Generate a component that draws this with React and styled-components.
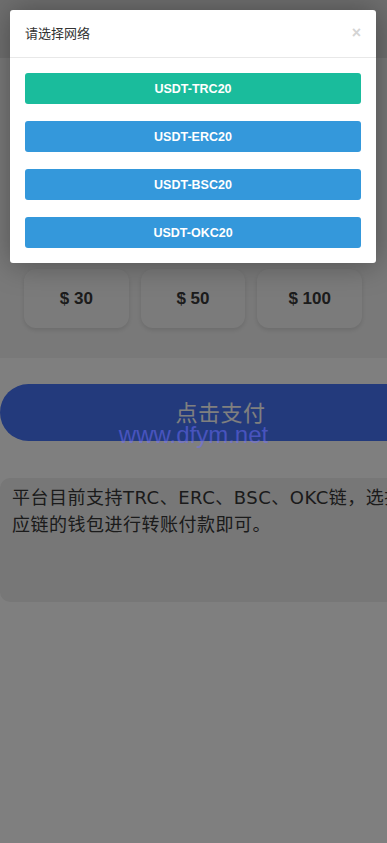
import React from 'react'
import styled, { createGlobalStyle } from 'styled-components'

const GlobalStyle = createGlobalStyle`
  html, body {
    margin: 0;
    padding: 0;
    height: 843px;
    overflow: hidden;
    background: #fff;
    font-family: "Noto Sans CJK SC", "Liberation Sans", sans-serif;
  }
`

export const Page = styled.div`
  position: relative;
  width: 387px;
  height: 843px;
  overflow: hidden;
  background: #fff;
`

export const TopBar = styled.div`
  height: 58px;
  background: #dedede;
`

export const AmountSection = styled.div`
  height: 300px;
  box-sizing: border-box;
  padding: 211px 25px 30px 24px;
  background: #f3f3f3;
`

export const AmountGrid = styled.div`
  display: grid;
  grid-template-columns: repeat(3, 1fr);
  gap: 12px;
`

export const AmountCard = styled.div`
  height: 59px;
  display: flex;
  align-items: center;
  justify-content: center;
  border-radius: 12px;
  background: #f7f7f7;
  box-shadow: 0 2px 5px rgba(0, 0, 0, 0.12);
  font-family: "Liberation Sans", Arial, sans-serif;
  font-weight: bold;
  font-size: 17px;
  color: #383838;
`

export const PayArea = styled.div`
  padding-top: 26px;
`

export const PayButton = styled.div`
  width: 441px;
  height: 57px;
  box-sizing: border-box;
  padding-bottom: 3px;
  border-radius: 29px;
  background: #4674f8;
  color: #fff;
  display: flex;
  align-items: center;
  justify-content: center;
  font-size: 22px;
  letter-spacing: 0.5px;
`

export const Notice = styled.div`
  margin-top: 37px;
  width: 460px;
  height: 124px;
  box-sizing: border-box;
  padding: 6px 30px 0 12px;
  border-radius: 10px;
  background: #eeeeee;
  font-size: 18px;
  line-height: 27px;
  letter-spacing: 0.5px;
  color: #363636;
  font-family: "DejaVu Sans", "Noto Sans CJK SC", sans-serif;
`

export const Shade = styled.div`
  position: absolute;
  inset: 0;
  background: rgba(0, 0, 0, 0.5);
`

export const Watermark = styled.div`
  position: absolute;
  top: 421px;
  left: 0;
  right: 0;
  text-align: center;
  font-family: "Liberation Sans", Arial, sans-serif;
  font-size: 24px;
  color: rgba(110, 110, 255, 0.5);
`

export const Dialog = styled.div`
  position: absolute;
  top: 10px;
  left: 10px;
  width: 366px;
  background: #fff;
  border-radius: 3px;
  box-shadow: 1px 1px 30px rgba(0, 0, 0, 0.35);
`

export const DialogHead = styled.div`
  height: 48px;
  box-sizing: border-box;
  padding: 0 15px 2px;
  display: flex;
  align-items: center;
  justify-content: space-between;
  border-bottom: 1px solid #e8e8e8;
  font-size: 13px;
  color: #333;
`

export const Close = styled.span`
  font-family: "Liberation Sans", Arial, sans-serif;
  font-size: 16px;
  font-weight: bold;
  color: #d4d4d4;
`

export const DialogBody = styled.div`
  display: flex;
  flex-direction: column;
  gap: 17px;
  padding: 15px;
`

export const NetButton = styled.div`
  height: 31px;
  border-radius: 3px;
  display: flex;
  align-items: center;
  justify-content: center;
  background: ${p => (p.$active ? '#1abc9c' : '#3498db')};
  color: #fff;
  font-family: "Liberation Sans", Arial, sans-serif;
  font-weight: bold;
  font-size: 12.5px;
`

const amounts = ['$ 30', '$ 50', '$ 100']
const networks = ['USDT-TRC20', 'USDT-ERC20', 'USDT-BSC20', 'USDT-OKC20']

export default function App() {
  return (
    <Page>
      <GlobalStyle />
      <TopBar />
      <AmountSection>
        <AmountGrid>
          {amounts.map(a => (
            <AmountCard key={a}>{a}</AmountCard>
          ))}
        </AmountGrid>
      </AmountSection>
      <PayArea>
        <PayButton>点击支付</PayButton>
      </PayArea>
      <Notice>平台目前支持TRC、ERC、BSC、OKC链，选择对应链的钱包进行转账付款即可。</Notice>
      <Shade />
      <Watermark>www.dfym.net</Watermark>
      <Dialog>
        <DialogHead>
          <span>请选择网络</span>
          <Close>×</Close>
        </DialogHead>
        <DialogBody>
          {networks.map((n, i) => (
            <NetButton key={n} $active={i === 0}>{n}</NetButton>
          ))}
        </DialogBody>
      </Dialog>
    </Page>
  )
}
